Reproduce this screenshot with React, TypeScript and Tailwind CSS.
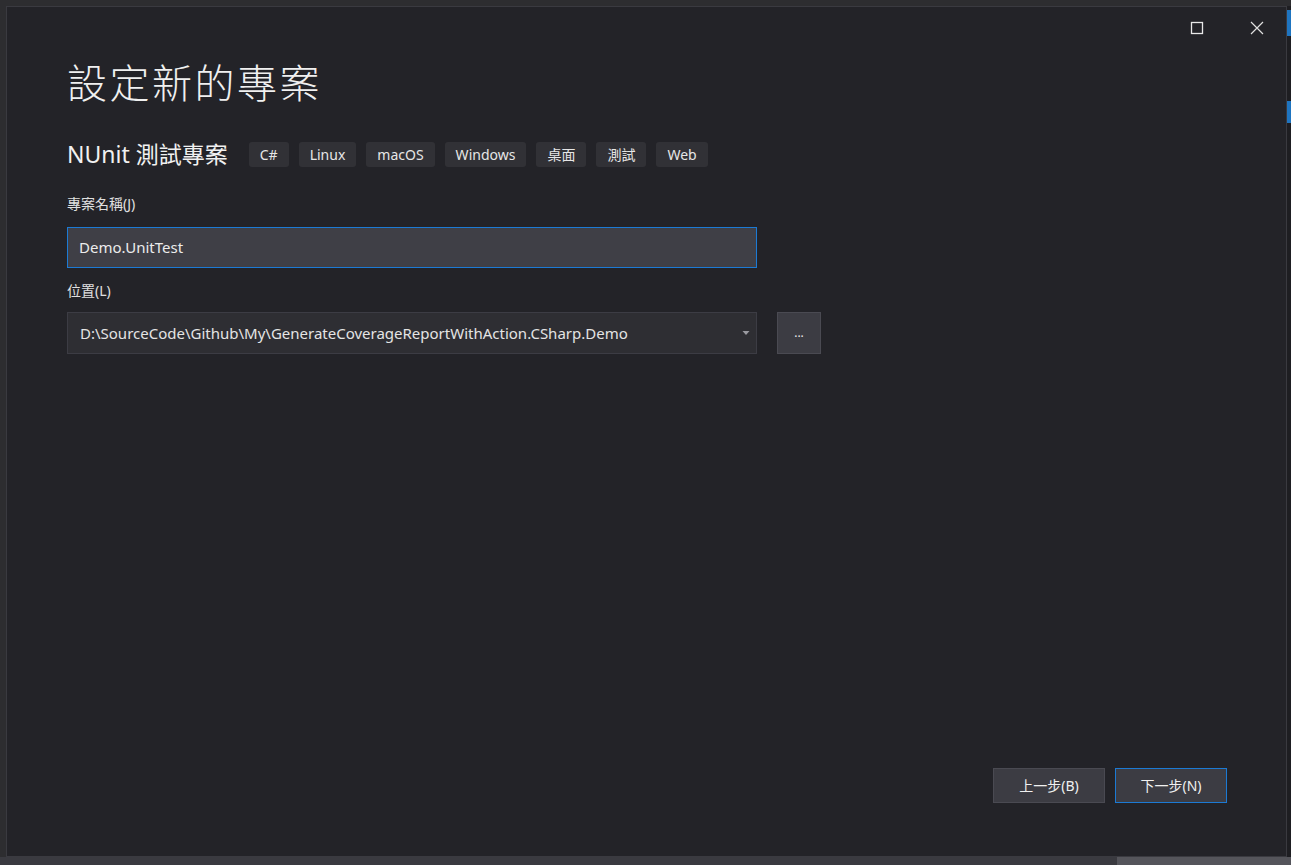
import React from "react";

function Tag({ children }: { children: React.ReactNode }) {
  return (
    <span className="flex h-[25px] items-center rounded-[3px] bg-[#313136] px-[11px] text-[14px] text-[#e6e6e6]">
      {children}
    </span>
  );
}

export default function App() {
  const tags = ["C#", "Linux", "macOS", "Windows", "桌面", "測試", "Web"];
  return (
    <div
      className="flex h-[865px] w-[1291px] flex-col overflow-hidden bg-[#2d2d30]"
      style={{ fontFamily: '"Noto Sans", "Noto Sans CJK TC", sans-serif' }}
    >
      <div className="flex h-[857px] pl-[6px] pt-[6px]">
        {/* window */}
        <div className="flex h-[851px] w-[1281px] flex-col border border-[#3a3a40] bg-[#232328]">
          {/* title bar */}
          <div className="flex h-[40px] items-start justify-end pr-[21px] pt-[13px]">
            <svg width="14" height="14" viewBox="0 0 14 14" className="mr-[45px] mt-[1px]">
              <rect x="1.5" y="1.5" width="11" height="11" fill="none" stroke="#e8e8e8" strokeWidth="1.3" />
            </svg>
            <svg width="16" height="16" viewBox="0 0 16 16">
              <path d="M2 2 L14 14 M14 2 L2 14" stroke="#e0e0e0" strokeWidth="1.2" />
            </svg>
          </div>
          <div className="flex flex-1 flex-col pl-[60px] pr-[59px]">
            <h1
              className="mt-[7px] text-[40px] font-light leading-[54px] tracking-[2.5px] text-[#f0f0f0]"
              style={{ fontFamily: '"Noto Sans CJK TC", sans-serif' }}
            >
              設定新的專案
            </h1>
            <div className="mt-[32px] flex items-center">
              <span className="mr-[21px] text-[23px] leading-[28px] text-[#f1f1f1]">NUnit 測試專案</span>
              <div className="flex gap-[10px]">
                {tags.map((t) => (
                  <Tag key={t}>{t}</Tag>
                ))}
              </div>
            </div>
            <label className="mt-[26px] text-[14px] leading-[20px] text-[#e0e0e0]">專案名稱(J)</label>
            <div className="mt-[13px] flex h-[41px] w-[690px] items-center border border-[#1c7ad4] bg-[#3f3f46] pl-[11px] text-[15px] text-[#ececec]">
              Demo.UnitTest
            </div>
            <label className="mt-[13px] text-[14px] leading-[20px] text-[#e0e0e0]">位置(L)</label>
            <div className="mt-[11px] flex items-center">
              <div className="flex h-[42px] w-[690px] items-center justify-between border border-[#3c3c44] bg-[#2e2e33] pl-[12px] pr-[6px] text-[15px] text-[#e4e4e4]">
                <span>D:\SourceCode\Github\My\GenerateCoverageReportWithAction.CSharp.Demo</span>
                <svg width="8" height="6" viewBox="0 0 8 6">
                  <path d="M0.5 1 L7.5 1 L4 5 Z" fill="#9a9aa0" />
                </svg>
              </div>
              <div className="ml-[20px] flex h-[42px] w-[44px] items-center justify-center border border-[#4a4a52] bg-[#3c3c43] text-[12px] text-[#e8e8e8]">
                ...
              </div>
            </div>
            <div className="flex-1" />
            <div className="mb-[53px] flex justify-end gap-[10px]">
              <button className="flex h-[35px] w-[112px] items-center justify-center border border-[#4a4a52] bg-[#3c3c43] text-[14px] text-[#f0f0f0]">
                上一步(B)
              </button>
              <button className="flex h-[35px] w-[112px] items-center justify-center border border-[#1c7ad4] bg-[#3c3c43] text-[14px] text-[#f0f0f0]">
                下一步(N)
              </button>
            </div>
          </div>
        </div>
        {/* right strip (background app) */}
        <div className="flex flex-1 flex-col bg-[#1e1e22]">
          <div className="mt-[4px] h-[26px] bg-[#1e74c0]" />
          <div className="mt-[65px] h-[22px] bg-[#1e74c0]" />
        </div>
      </div>
      <div className="flex h-[8px]">
        <div className="w-[1117px] bg-[#3a3a40]" />
        <div className="flex-1 bg-[#55555b]" />
      </div>
    </div>
  );
}
